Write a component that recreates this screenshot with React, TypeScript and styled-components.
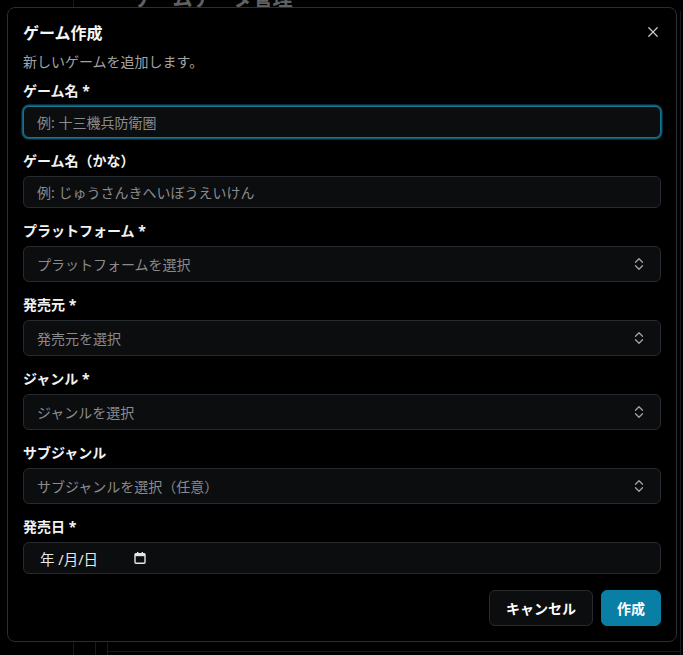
import React from "react";
import styled, { createGlobalStyle, css } from "styled-components";

const GlobalStyle = createGlobalStyle`
  html, body {
    margin: 0;
    padding: 0;
    background: #000;
    overflow: hidden;
  }
  body {
    font-family: "Noto Sans", "Noto Sans CJK JP", sans-serif;
    color: #f5f5f5;
  }
  * { box-sizing: border-box; }
`;

/* ---------- page behind the dialog ---------- */
const Page = styled.div`
  display: flex;
  height: 655px;
  width: 683px;
  background: #000;
`;

const Sidebar = styled.aside`
  width: 74px;
  flex-shrink: 0;
  border-right: 1px solid #3a3a3a;
`;

const Main = styled.main`
  flex: 1;
  display: flex;
  flex-direction: column;
  padding-left: 21px;
`;

const PageTitle = styled.h1`
  margin: -13px 0 0 0;
  padding-left: 38px;
  font-size: 20px;
  line-height: 24px;
  font-weight: 700;
  color: #d8d8d8;
`;

const Panel = styled.section`
  flex: 1;
  display: flex;
  border-left: 1px solid #3a3a3a;
  padding-left: 11px;
`;

const PanelInner = styled.div`
  flex: 1;
  display: flex;
  flex-direction: column;
  justify-content: flex-end;
  border-left: 1px solid #3a3a3a;
  border-right: 1px solid #3a3a3a;
  margin-right: 2px;
`;

const PanelRow = styled.div`
  height: 4px;
  border-top: 1px solid #3a3a3a;
`;

/* ---------- overlay + dialog ---------- */
const Overlay = styled.div`
  position: fixed;
  inset: 0;
  background: rgba(0, 0, 0, 0.55);
`;

const Dialog = styled.div`
  position: fixed;
  top: 7px;
  left: 7px;
  width: 670px;
  border: 1px solid #2b2d30;
  border-radius: 8px;
  background: #000;
  padding: 15px;
  display: flex;
  flex-direction: column;
`;

const CloseButton = styled.button`
  position: absolute;
  top: 16px;
  right: 15px;
  width: 16px;
  height: 16px;
  padding: 0;
  border: none;
  background: transparent;
  display: flex;
  align-items: center;
  justify-content: center;
  color: #c4c4c4;
  cursor: pointer;
`;

const Title = styled.h2`
  margin: 0;
  font-size: 16px;
  line-height: 20px;
  font-weight: 700;
  color: #f7f7f7;
`;

const Description = styled.p`
  margin: 9px 0 0 0;
  font-size: 14px;
  line-height: 20px;
  color: #a3a3a3;
`;

const Form = styled.form`
  margin-top: 9px;
  display: flex;
  flex-direction: column;
  gap: 13px;
`;

const Field = styled.div`
  display: flex;
  flex-direction: column;
  gap: 5px;
`;

const Label = styled.label`
  font-size: 14px;
  line-height: 20px;
  font-weight: 700;
  color: #f2f2f2;
`;

const controlBase = css`
  width: 100%;
  border: 1px solid #272a2e;
  border-radius: 6px;
  background: #0c0d0f;
  font-family: "Noto Sans", "Noto Sans CJK JP", sans-serif;
  font-size: 14px;
  color: #ededed;
  outline: none;
`;

const TextInput = styled.input<{ $focused?: boolean }>`
  ${controlBase};
  height: 32px;
  padding: 0 13px;
  &::placeholder {
    color: #8a8b8d;
  }
  ${(p) =>
    p.$focused &&
    css`
      border-color: #167493;
      box-shadow: 0 0 0 1.5px #0f5a73;
    `}
`;

const SelectTrigger = styled.button`
  ${controlBase};
  height: 36px;
  padding: 0 16px 0 13px;
  display: flex;
  align-items: center;
  justify-content: space-between;
  text-align: left;
  cursor: pointer;
`;

const Placeholder = styled.span`
  color: #8a8b8d;
`;

const DateField = styled.div`
  ${controlBase};
  height: 32px;
  padding: 0 0 0 16px;
  display: flex;
  align-items: center;
  font-size: 14.5px;
  color: #e6e6e6;
`;

const DateText = styled.span`
  white-space: pre;
`;

const CalendarIcon = styled.svg`
  margin-left: 36px;
  display: block;
`;

const Footer = styled.div`
  margin-top: 3px;
  display: flex;
  justify-content: flex-end;
  gap: 8px;
`;

const Button = styled.button<{ $variant?: "primary" | "outline" }>`
  height: 36px;
  border-radius: 6px;
  font-family: "Noto Sans", "Noto Sans CJK JP", sans-serif;
  font-size: 14px;
  font-weight: 700;
  color: #ffffff;
  cursor: pointer;
  ${(p) =>
    p.$variant === "primary"
      ? css`
          background: #0a7fa6;
          border: 1px solid #0a7fa6;
          padding: 0 15px;
        `
      : css`
          background: #0c0d0f;
          border: 1px solid #272a2e;
          padding: 0 16px;
        `}
`;

const Chevrons = () => (
  <svg width="10" height="14" viewBox="0 0 10 14" fill="none" stroke="#a3a3a3" strokeWidth="1.3" strokeLinecap="round" strokeLinejoin="round">
    <polyline points="1.5,5.2 5,1.8 8.5,5.2" />
    <polyline points="1.5,8.8 5,12.2 8.5,8.8" />
  </svg>
);

const selects = [
  { label: "プラットフォーム *", placeholder: "プラットフォームを選択" },
  { label: "発売元 *", placeholder: "発売元を選択" },
  { label: "ジャンル *", placeholder: "ジャンルを選択" },
  { label: "サブジャンル", placeholder: "サブジャンルを選択（任意）" },
];

export default function App() {
  return (
    <>
      <GlobalStyle />
      <Page>
        <Sidebar />
        <Main>
          <PageTitle>ゲームデータ管理</PageTitle>
          <Panel>
            <PanelInner>
              <PanelRow />
            </PanelInner>
          </Panel>
        </Main>
      </Page>
      <Overlay />
      <Dialog role="dialog">
        <Title>ゲーム作成</Title>
        <Description>新しいゲームを追加します。</Description>
        <CloseButton aria-label="閉じる">
          <svg width="10" height="10" viewBox="0 0 10 10" stroke="currentColor" strokeWidth="1.3" strokeLinecap="round">
            <line x1="0.8" y1="0.8" x2="9.2" y2="9.2" />
            <line x1="9.2" y1="0.8" x2="0.8" y2="9.2" />
          </svg>
        </CloseButton>
        <Form onSubmit={(e) => e.preventDefault()}>
          <Field>
            <Label>ゲーム名 *</Label>
            <TextInput $focused placeholder="例: 十三機兵防衛圏" />
          </Field>
          <Field>
            <Label>ゲーム名（かな）</Label>
            <TextInput placeholder="例: じゅうさんきへいぼうえいけん" />
          </Field>
          {selects.map((s) => (
            <Field key={s.label}>
              <Label>{s.label}</Label>
              <SelectTrigger type="button">
                <Placeholder>{s.placeholder}</Placeholder>
                <Chevrons />
              </SelectTrigger>
            </Field>
          ))}
          <Field>
            <Label>発売日 *</Label>
            <DateField>
              <DateText>年 /月/日</DateText>
              <CalendarIcon width="12" height="12" viewBox="0 0 12 12" fill="none">
                <rect x="1" y="1.6" width="10" height="9.6" rx="1" stroke="#e6e6e6" strokeWidth="1.4" />
                <rect x="1" y="1.6" width="10" height="2.6" fill="#e6e6e6" />
                <rect x="3" y="0" width="1.4" height="2" fill="#e6e6e6" />
                <rect x="7.6" y="0" width="1.4" height="2" fill="#e6e6e6" />
              </CalendarIcon>
            </DateField>
          </Field>
          <Footer>
            <Button type="button" $variant="outline">キャンセル</Button>
            <Button type="submit" $variant="primary">作成</Button>
          </Footer>
        </Form>
      </Dialog>
    </>
  );
}
